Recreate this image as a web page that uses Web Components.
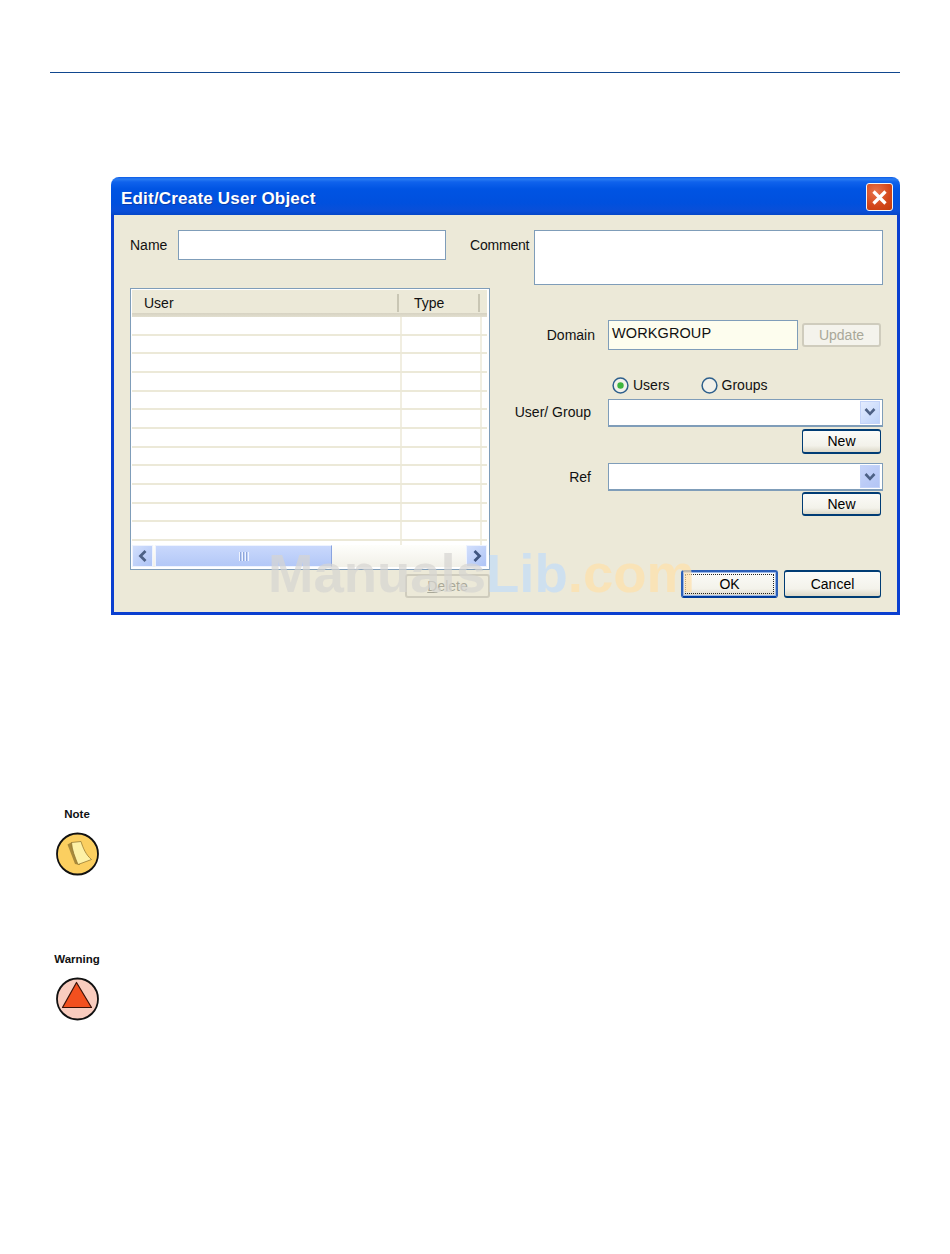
<!DOCTYPE html>
<html>
<head>
<meta charset="utf-8">
<title>Edit/Create User Object</title>
<style>
  html, body { margin: 0; padding: 0; background: #fff; }
  body { width: 950px; height: 1254px; position: relative; overflow: hidden; font-family: "Liberation Sans", Arial, sans-serif; }
</style>
</head>
<body>
<page-rule></page-rule>
<user-dialog></user-dialog>
<side-callout kind="note" style="margin-top:193px">Note</side-callout>
<side-callout kind="warning" style="margin-top:76px">Warning</side-callout>
<water-mark></water-mark>

<script>
class PageRule extends HTMLElement {
  constructor() {
    super();
    this.attachShadow({ mode: 'open' });
    this.shadowRoot.innerHTML = `
    <style>
      :host { display: block; height: 1px; margin: 72px 50px 0 50px; background: #11478f; }
    </style>`;
  }
}
customElements.define('page-rule', PageRule);

class XpWindow extends HTMLElement {
  constructor() {
    super();
    this.attachShadow({ mode: 'open' });
    this.shadowRoot.innerHTML = `
    <style>
      :host { display: block; width: 789px; margin: 104px 0 0 111px; }
      .title {
        height: 38px;
        display: flex;
        align-items: center;
        justify-content: space-between;
        box-sizing: border-box;
        padding: 2px 7px 0 10px;
        border-radius: 8px 8px 0 0;
        background: linear-gradient(#0a5ae6 0, #2a7cf2 2px, #0f62ec 5px, #0054e3 12px, #0050de 26px, #0a4fd8 34px, #0647c8 38px);
        color: #fff;
        font: bold 17px "Liberation Sans", Arial, sans-serif;
        letter-spacing: .2px;
        text-shadow: 1px 1px 0 #0b3aa8;
      }
      .title span { padding-top: 4px; }
      .close {
        width: 27px;
        height: 28px;
        box-sizing: border-box;
        border: 1px solid #f3f3f3;
        border-radius: 3px;
        background: radial-gradient(circle at 35% 30%, #e8734b, #d2461a 60%, #c23b0c);
        display: flex;
        align-items: center;
        justify-content: center;
      }
      .body {
        height: 397px;
        box-sizing: content-box;
        background: #ece9d8;
        border-style: solid;
        border-color: #0a3fd0;
        border-width: 0 3px 3px 3px;
      }
    </style>
    <div class="title">
      <span>${this.getAttribute('heading') || ''}</span>
      <div class="close">
        <svg width="17" height="17" viewBox="0 0 17 17"><path d="M2.5 2.5 L14.5 14.5 M14.5 2.5 L2.5 14.5" stroke="#fff" stroke-width="3.2" fill="none"/></svg>
      </div>
    </div>
    <div class="body"><slot></slot></div>`;
  }
}
customElements.define('xp-window', XpWindow);

class XpButton extends HTMLElement {
  constructor() {
    super();
    this.attachShadow({ mode: 'open' });
    this.shadowRoot.innerHTML = `
    <style>
      :host { display: block; box-sizing: border-box; font: 14px "Liberation Sans", Arial, sans-serif; color: #000; }
      .btn {
        width: 100%;
        height: 100%;
        box-sizing: border-box;
        border: 1px solid #003c74;
        border-width: 2px 1px;
        border-radius: 3px;
        background: linear-gradient(#fbfbf8, #f3f2ea 70%, #dcd8c8);
        display: flex;
        align-items: center;
        justify-content: center;
      }
      :host([disabled]) .btn { border: 2px solid #cfccbd; background: #f4f3ec; color: #a9a899; }
      :host([flat]) .btn { background: #ece9d8; }
      :host([default]) .btn { border: 2px solid #2b5fb8; border-bottom-color: #003c9c; box-shadow: inset 0 0 0 1px #9db9ea; }
      :host([default]) .inner {
        width: calc(100% - 4px);
        height: calc(100% - 4px);
        border: 1px dotted #222;
        box-sizing: border-box;
        display: flex;
        align-items: center;
        justify-content: center;
      }
    </style>
    <div class="btn"><div class="inner"><slot></slot></div></div>`;
  }
}
customElements.define('xp-button', XpButton);

class XpCombo extends HTMLElement {
  constructor() {
    super();
    this.attachShadow({ mode: 'open' });
    this.shadowRoot.innerHTML = `
    <style>
      :host { display: block; width: 275px; height: 28px; box-sizing: border-box; background: #fff; border: 1px solid #7f9db9; border-bottom-width: 2px; position: relative; }
      .wrap { height: 100%; display: flex; justify-content: flex-end; align-items: flex-start; padding: 1px 2px 0 0; box-sizing: border-box; }
      .arrow {
        width: 20px;
        height: 23px;
        box-sizing: border-box;
        border: 1px solid #c3d3f8;
        background: linear-gradient(135deg, #c6d4f9, #b3c5f5);
        display: flex;
        align-items: center;
        justify-content: center;
      }
      :host([light]) .arrow { background: linear-gradient(135deg, #e4ecfe, #bdd3fa); }
    </style>
    <div class="wrap"><div class="arrow">
      <svg width="14" height="10" viewBox="0 0 14 10"><path d="M2.5 2 L7 6.8 L11.5 2" stroke="#4d6185" stroke-width="2.6" fill="none"/></svg>
    </div></div>`;
  }
}
customElements.define('xp-combo', XpCombo);

class XpRadio extends HTMLElement {
  constructor() {
    super();
    this.attachShadow({ mode: 'open' });
    const on = this.hasAttribute('checked');
    this.shadowRoot.innerHTML = `
    <style>
      :host { display: flex; align-items: center; gap: 4px; font: 14px "Liberation Sans", Arial, sans-serif; color: #111; }
      svg { display: block; }
    </style>
    <svg width="17" height="17" viewBox="0 0 17 17">
      <circle cx="8.5" cy="8.5" r="7.4" fill="#f2f1ea" stroke="#2d5f8c" stroke-width="1.5"/>
      ${on ? '<circle cx="8.5" cy="8.5" r="3.2" fill="#3db53d"/>' : ''}
    </svg>
    <slot></slot>`;
  }
}
customElements.define('xp-radio', XpRadio);

class XpListview extends HTMLElement {
  constructor() {
    super();
    this.attachShadow({ mode: 'open' });
    let rows = '';
    for (let i = 0; i < 12; i++) {
      rows += '<div class="row"><i></i><i></i><i></i></div>';
    }
    this.shadowRoot.innerHTML = `
    <style>
      :host { display: block; width: 360px; height: 282px; box-sizing: border-box; background: #fff; border: 1px solid #7f9db9; padding: 1px 2px 2px 1px; font: 14px "Liberation Sans", Arial, sans-serif; color: #111; }
      .head { height: 27px; display: flex; background: linear-gradient(#ece9d8 23px, #d6d2c2 23px, #e2dfcf 27px); }
      .head div { height: 18px; margin-top: 4px; line-height: 18px; box-sizing: border-box; border-right: 2px solid #c9c6b4; }
      .head .user { width: 267px; padding-left: 12px; }
      .head .type { width: 81px; padding-left: 15px; }
      .rows { height: 224px; display: flex; flex-direction: column; }
      .row { flex: 1; display: flex; border-bottom: 2px solid #ece9d8; }
      .row i, .tail i { display: block; box-sizing: border-box; border-right: 2px solid #f1eee1; }
      .row i:nth-child(1), .tail i:nth-child(1) { width: 270px; }
      .row i:nth-child(2), .tail i:nth-child(2) { width: 80px; }
      .row i:nth-child(3), .tail i:nth-child(3) { flex: 1; border: 0; }
      .tail { height: 4px; display: flex; }
      .bar { height: 22px; display: flex; align-items: stretch; background: linear-gradient(#fefefb, #f1f0e8); }
      .step { width: 21px; box-sizing: border-box; border: 1px solid #eef3fe; background: linear-gradient(135deg, #d2dffc, #aec4f6); display: flex; align-items: center; justify-content: center; }
      .thumb { width: 177px; margin-left: 2px; box-sizing: border-box; border: 1px solid #eef3fe; border-right-color: #8aa4e0; background: linear-gradient(#c9d8fc, #b3c8f7); display: flex; align-items: center; justify-content: center; }
      .track { flex: 1; }
    </style>
    <div class="head"><div class="user">User</div><div class="type">Type</div></div>
    <div class="rows">${rows}</div>
    <div class="tail"><i></i><i></i><i></i></div>
    <div class="bar">
      <div class="step"><svg width="12" height="14" viewBox="0 0 12 14"><path d="M8.5 2 L3.5 7 L8.5 12" stroke="#4d6185" stroke-width="2.8" fill="none"/></svg></div>
      <div class="thumb"><svg width="11" height="9" viewBox="0 0 11 9"><path d="M1.5 0V9M4.5 0V9M7.5 0V9M10.5 0V9" stroke="#eef3fe" stroke-width="1"/><path d="M2.5 0V9M5.5 0V9M8.5 0V9" stroke="#8ea6da" stroke-width="1"/></svg></div>
      <div class="track"></div>
      <div class="step"><svg width="12" height="14" viewBox="0 0 12 14"><path d="M3.5 2 L8.5 7 L3.5 12" stroke="#3f5580" stroke-width="2.8" fill="none"/></svg></div>
    </div>`;
  }
}
customElements.define('xp-listview', XpListview);

class UserDialog extends HTMLElement {
  constructor() {
    super();
    this.attachShadow({ mode: 'open' });
    this.shadowRoot.innerHTML = `
    <style>
      :host { display: block; font: 14px "Liberation Sans", Arial, sans-serif; color: #111; }
      .pane { padding: 15px 14px 0 16px; }
      .top { display: flex; height: 55px; }
      .top label { line-height: 30px; display: block; }
      .name-label { width: 48px; }
      .comment-label { width: 64px; margin-left: 24px; letter-spacing: -.2px; }
      .box { box-sizing: border-box; background: #fff; border: 1px solid #7f9db9; }
      .name { width: 268px; height: 30px; }
      .comment { width: 349px; height: 55px; }
      .lower { display: flex; margin-top: 3px; }
      .left { width: 360px; }
      .delete { width: 85px; height: 24px; margin: 4px 0 0 275px; }
      .form { width: 393px; margin-top: 32px; display: grid; grid-template-columns: 101px 275px; column-gap: 17px; }
      .form > label { text-align: right; }
      .domain-label { line-height: 30px; margin-right: -4px; }
      .domain-line { display: flex; align-items: center; gap: 4px; height: 30px; }
      .domain { width: 190px; height: 30px; background: #fdfdee; padding-left: 3px; line-height: 24px; font-size: 14.5px; letter-spacing: .1px; color: #111; }
      .update { width: 79px; height: 24px; }
      .radios { grid-column: 2; display: flex; gap: 31px; height: 18px; padding-left: 4px; margin-top: 26px; }
      .combo-label { line-height: 26px; }
      .ref-label { line-height: 28px; }
      .new { width: 79px; height: 25px; margin: 2px 0 0 194px; grid-column: 2; }
      .g1 { margin-top: 5px; }
      .g1 + xp-combo { margin-top: 4px; }
      .g2 { margin-top: 9px; }
      .g3 { margin: 1px 0 0 194px; height: 24px; }
      .actions { grid-column: 1 / 3; display: flex; justify-content: flex-end; gap: 6px; padding-right: 2px; margin-top: 53px; }
      .actions xp-button { width: 97px; height: 28px; }
    </style>
    <xp-window heading="Edit/Create User Object">
      <div class="pane">
        <div class="top">
          <label class="name-label">Name</label>
          <div class="box name"></div>
          <label class="comment-label">Comment</label>
          <div class="box comment"></div>
        </div>
        <div class="lower">
          <div class="left">
            <xp-listview></xp-listview>
            <xp-button class="delete" disabled flat><span><u>D</u>elete</span></xp-button>
          </div>
          <div class="form">
            <label class="domain-label">Domain</label>
            <div class="domain-line">
              <div class="box domain">WORKGROUP</div>
              <xp-button class="update" disabled>Update</xp-button>
            </div>
            <div class="radios">
              <xp-radio checked>Users</xp-radio>
              <xp-radio>Groups</xp-radio>
            </div>
            <label class="combo-label g1" style="margin-top:4px">User/ Group</label>
            <xp-combo light style="margin-top:4px"></xp-combo>
            <xp-button class="new">New</xp-button>
            <label class="ref-label g2">Ref</label>
            <xp-combo class="g2"></xp-combo>
            <xp-button class="new g3">New</xp-button>
            <div class="actions">
              <xp-button default>OK</xp-button>
              <xp-button>Cancel</xp-button>
            </div>
          </div>
        </div>
      </div>
    </xp-window>`;
  }
}
customElements.define('user-dialog', UserDialog);

class SideCallout extends HTMLElement {
  constructor() {
    super();
    this.attachShadow({ mode: 'open' });
    const note = `
      <circle cx="22.5" cy="22" r="20.5" fill="#fbcf60" stroke="#111" stroke-width="1.8"/>
      <path d="M12.5 12.5 L17 10 L25 33 L20 32 Z" fill="#a8893a"/>
      <path d="M16.5 10.5 L26 9.5 C28 16 31 23 36.5 27.5 L23 32.5 C20 25 17 18 16.5 10.5 Z" fill="#fdf1a6" stroke="#8a6f2a" stroke-width=".7"/>`;
    const warning = `
      <circle cx="22.5" cy="22" r="20.5" fill="#f9ccbe" stroke="#111" stroke-width="1.8"/>
      <path d="M21.5 5.5 L36.5 30.5 H7.5 Z" fill="#f2501f" stroke="#3a1208" stroke-width="1.2" stroke-linejoin="round"/>`;
    this.shadowRoot.innerHTML = `
    <style>
      :host { display: block; width: 46px; margin-left: 54px; text-align: center; font: bold 11.5px "Liberation Sans", Arial, sans-serif; color: #111; }
      .label { height: 13px; line-height: 13px; white-space: nowrap; display: flex; justify-content: center; }
      svg { display: block; margin: 11px 0 0 1px; }
    </style>
    <div class="label"><slot></slot></div>
    <svg width="45" height="45" viewBox="0 0 45 45">${this.getAttribute('kind') === 'note' ? note : warning}</svg>`;
  }
}
customElements.define('side-callout', SideCallout);

class WaterMark extends HTMLElement {
  constructor() {
    super();
    this.attachShadow({ mode: 'open' });
    this.shadowRoot.innerHTML = `
    <style>
      :host { position: absolute; left: 268px; top: 543px; font: bold 54.5px/61px "Liberation Sans", Arial, sans-serif; white-space: nowrap; pointer-events: none; }
      .a { color: rgba(213, 212, 210, .7); }
      .b { color: rgba(194, 220, 250, .7); }
      .c { color: rgba(255, 223, 170, .7); }
    </style>
    <span class="a">Manuals</span><span class="b">Lib</span><span class="c">.com</span>`;
  }
}
customElements.define('water-mark', WaterMark);
</script>
</body>
</html>
